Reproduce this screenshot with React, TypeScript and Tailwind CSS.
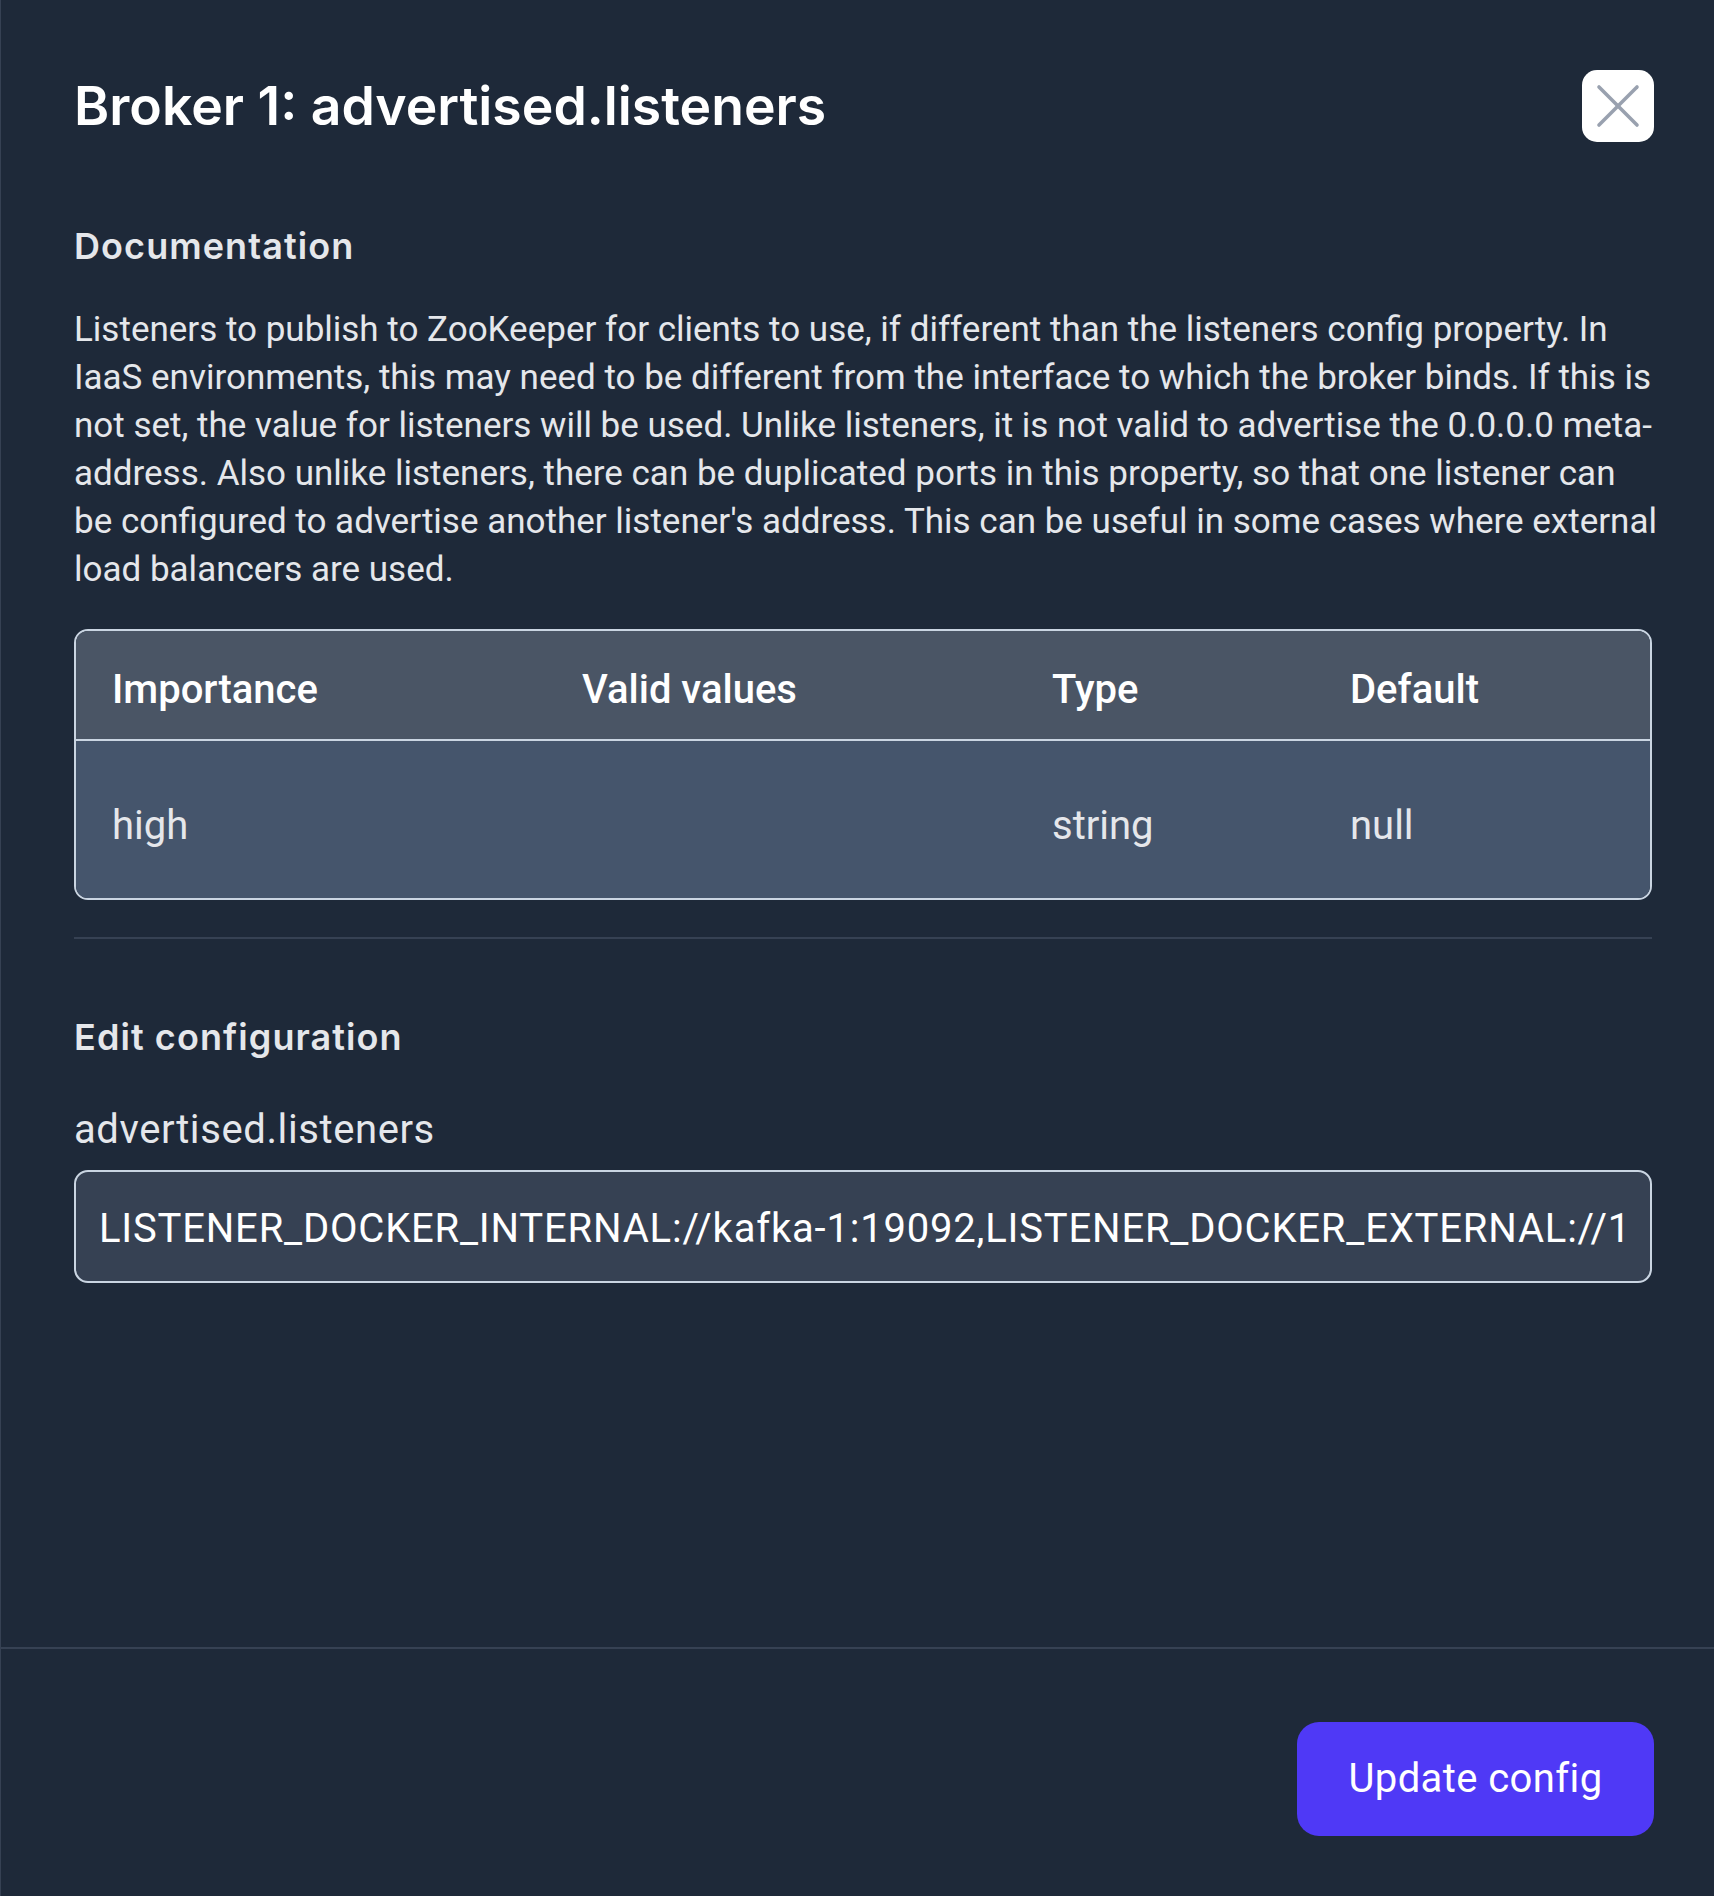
const docLines = [
  "Listeners to publish to ZooKeeper for clients to use, if different than the listeners config property. In",
  "IaaS environments, this may need to be different from the interface to which the broker binds. If this is",
  "not set, the value for listeners will be used. Unlike listeners, it is not valid to advertise the 0.0.0.0 meta-",
  "address. Also unlike listeners, there can be duplicated ports in this property, so that one listener can",
  "be configured to advertise another listener's address. This can be useful in some cases where external",
  "load balancers are used.",
]

const listenerValue =
  "LISTENER_DOCKER_INTERNAL://kafka-1:19092,LISTENER_DOCKER_EXTERNAL://127.0.0.1:9092"

export default function App() {
  return (
    <div className="min-h-screen flex flex-col bg-gray-800 border-l border-gray-700 font-['Roboto',sans-serif]">
      <div className="flex-1 pl-[73px] pr-[62px]">
        {/* Header */}
        <div className="pt-[70px] flex items-center justify-between">
          <h1 className="font-['Inter',sans-serif] font-semibold text-[53.5px] leading-[72px] text-white">
            Broker 1: advertised.listeners
          </h1>
          <button className="w-[72px] h-[72px] -mr-[2px] rounded-[15px] bg-white flex items-center justify-center">
            <svg viewBox="0 0 44 44" className="w-[44px] h-[44px] text-gray-400" fill="none" stroke="currentColor" strokeWidth={3.6} strokeLinecap="round">
              <path d="M3 3 41 41" />
              <path d="M41 3 3 41" />
            </svg>
          </button>
        </div>

        {/* Documentation */}
        <h2 className="mt-[82px] font-['Inter',sans-serif] font-semibold text-[36px] leading-[44px] tracking-[0.03em] text-gray-200">
          Documentation
        </h2>
        <p className="mt-[38px] text-[35px] leading-[48px] text-gray-200">
          {docLines.map((line) => (
            <span key={line} className="block whitespace-nowrap">
              {line}
            </span>
          ))}
        </p>

        <div className="mt-[35px] rounded-[14px] border-2 border-slate-300 overflow-hidden">
          <div className="grid grid-cols-[470px_470px_298px_1fr] h-[110px] items-center bg-gray-600 border-b-2 border-slate-300 text-[40px] font-medium text-white">
            <div className="pl-[36px] pt-[10px]">Importance</div>
            <div className="pl-[36px] pt-[10px]">Valid values</div>
            <div className="pl-[36px] pt-[10px]">Type</div>
            <div className="pl-[36px] pt-[10px]">Default</div>
          </div>
          <div className="grid grid-cols-[470px_470px_298px_1fr] h-[157px] items-center bg-slate-600 text-[40px] text-gray-200">
            <div className="pl-[36px] pt-[13px]">high</div>
            <div className="pl-[36px]"></div>
            <div className="pl-[36px] pt-[13px]">string</div>
            <div className="pl-[36px] pt-[13px]">null</div>
          </div>
        </div>

        <div className="mt-[37px] h-[2px] bg-gray-700" />

        {/* Edit configuration */}
        <h2 className="mt-[76px] font-['Inter',sans-serif] font-semibold text-[36px] leading-[44px] tracking-[0.03em] text-gray-200">
          Edit configuration
        </h2>
        <label className="block mt-[47px] text-[40px] leading-[48px] tracking-[0.015em] text-gray-200">
          advertised.listeners
        </label>
        <input
          readOnly
          value={listenerValue}
          className="mt-[16px] w-full h-[113px] rounded-[14px] border-2 border-slate-300 bg-gray-700 pl-[23px] pr-[24px] pt-[4px] text-[40px] tracking-[0.02em] text-white outline-none"
        />
      </div>

      {/* Footer */}
      <div className="border-t-2 border-gray-700 pt-[73px] pb-[60px] pr-[60px] flex justify-end">
        <button className="w-[357px] h-[114px] rounded-[22px] bg-indigo-600 text-[40px] tracking-[0.01em] text-white">
          Update config
        </button>
      </div>
    </div>
  )
}
